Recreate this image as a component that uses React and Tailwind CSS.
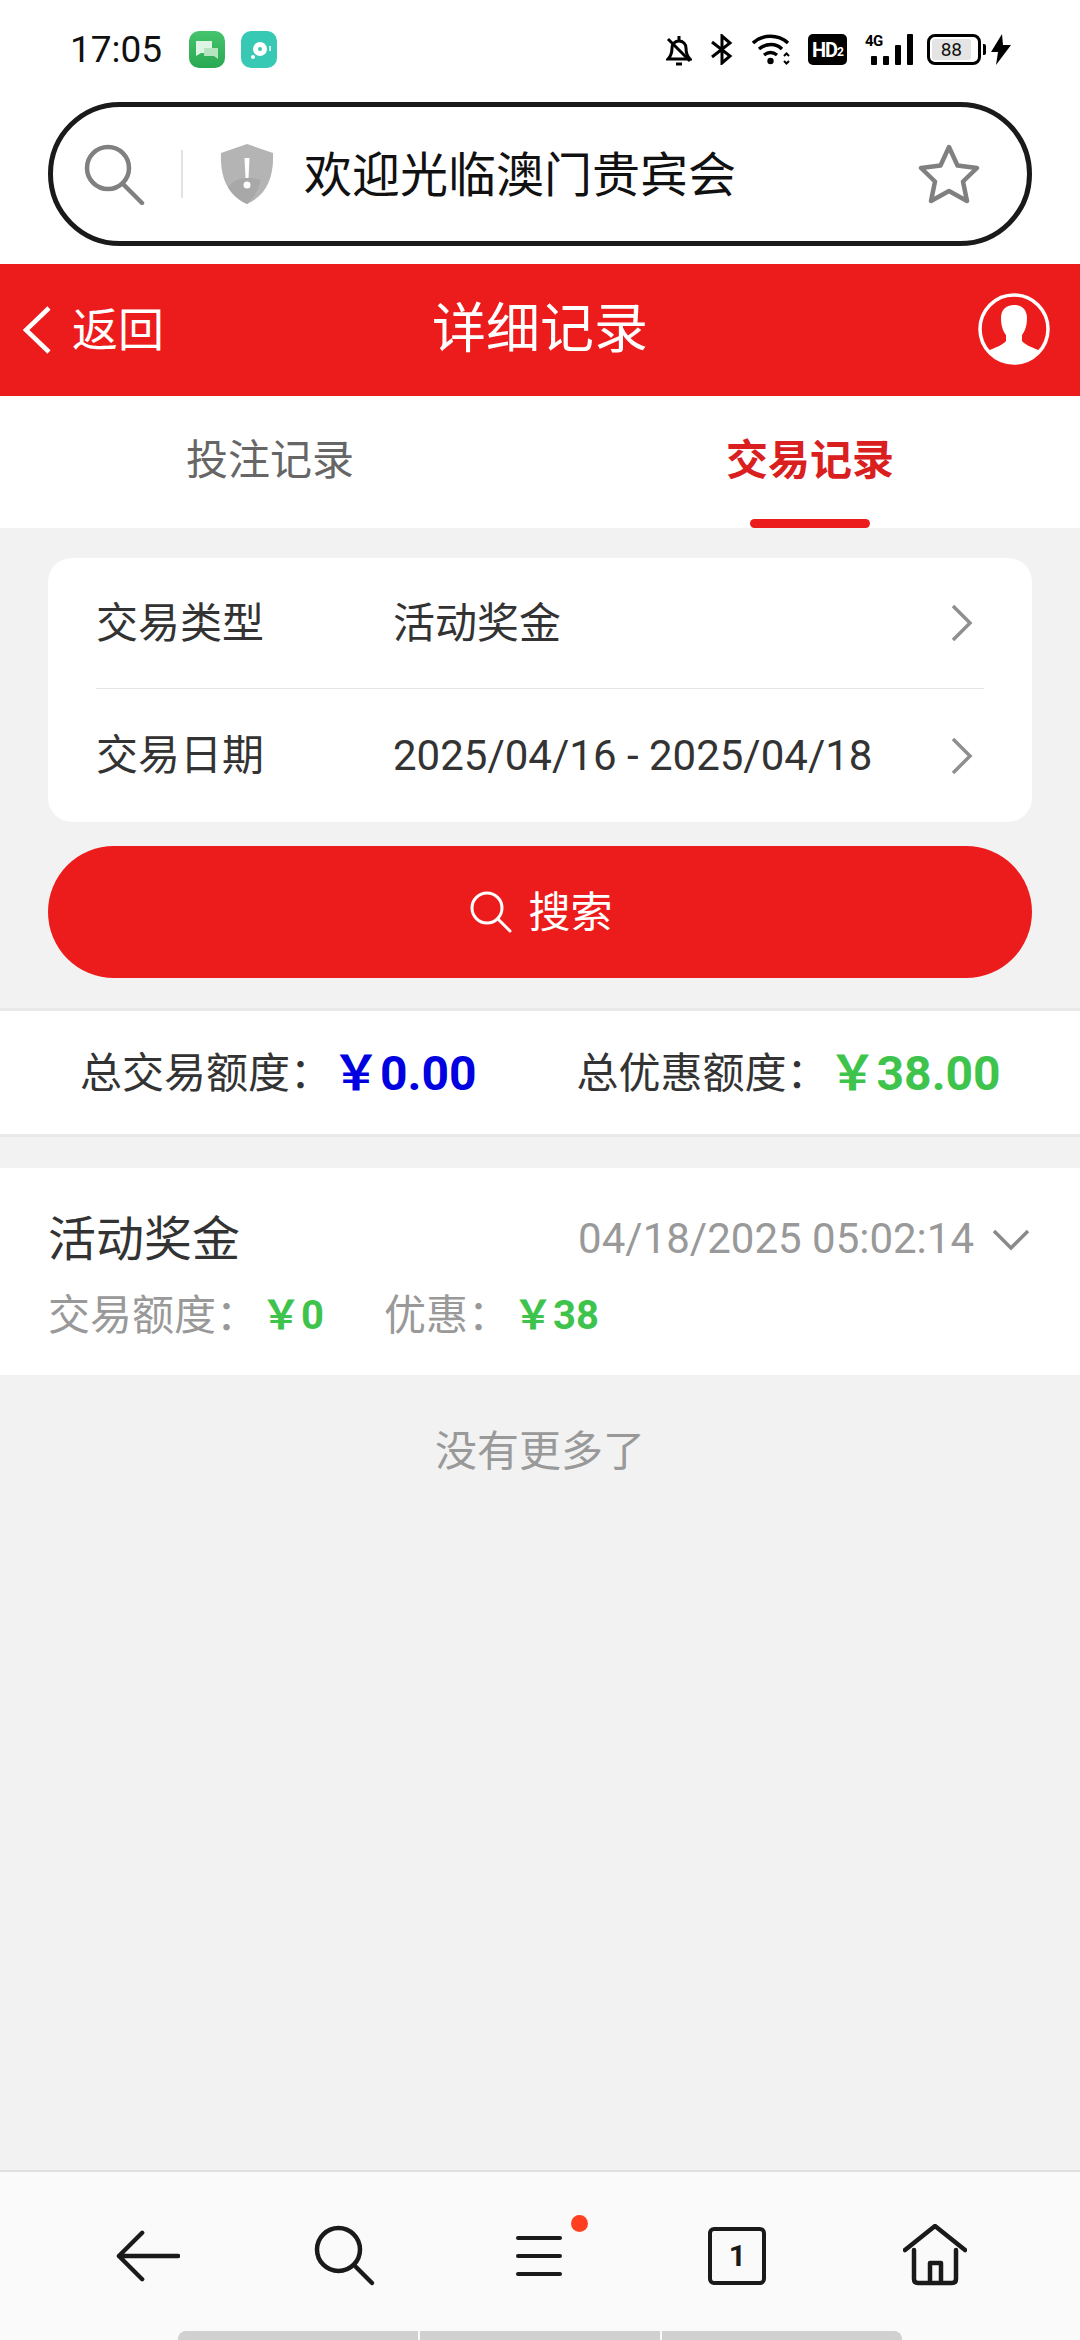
const cjk = "font-['Roboto','Noto_Sans_CJK_SC',sans-serif]";

const Chevron = () => (
  <svg className="mr-[10px]" width="24" height="38" viewBox="0 0 24 38" fill="none" stroke="#8f8f8f" strokeWidth="3.500">
    <path d="M3 2l17 17L3 36" />
  </svg>
);

const StatusIcons = () => (
  <div className="flex h-[31px] items-center text-black">
    <svg width="26" height="32" viewBox="0 0 26 32" fill="none" stroke="#000" strokeWidth="3">
      <path d="M2 25c3-3 4-6 4-11 0-4 3-7 7-7s7 3 7 7c0 5 1 8 4 11z" />
      <path d="M13 2v4M2 5l22 22M10 30h6" />
    </svg>
    <svg className="ml-[18px]" width="23" height="31" viewBox="0 0 23 31" fill="none" stroke="#000" strokeWidth="3">
      <path d="M2 8l18 14-8 7V2l8 7L2 23" />
    </svg>
    <svg className="ml-[19px]" width="40" height="31" viewBox="0 0 40 31" fill="none" stroke="#000" strokeWidth="3.400">
      <path d="M1 9c10-9 25-9 35 0M7 15c7-6 17-6 23 0M12 21c4-3 9-3 13 0" />
      <circle cx="18.500" cy="27" r="3.200" fill="#000" stroke="none" />
      <path d="M32 22l2.500-2.500L37 22M32 27l2.500 2.500L37 27" strokeWidth="2" />
    </svg>
    <div className="ml-[16px] flex h-[31px] w-[39px] items-center justify-center rounded-[5px] bg-black font-['Roboto',sans-serif] text-[20px] font-bold tracking-[-1px] text-white">
      HD<span className="mt-[4px] text-[12px]">2</span>
    </div>
    <div className="relative ml-[18px] h-[31px] w-[44px]">
      <span className="absolute left-0 top-[-4px] font-['Roboto',sans-serif] text-[15px] font-bold tracking-[-0.5px]">4G</span>
      <div className="absolute bottom-0 left-[6px] flex items-end gap-[6px]">
        <span className="h-[9px] w-[6px] rounded-[1px] bg-black" />
        <span className="h-[9px] w-[6px] rounded-[1px] bg-black" />
        <span className="h-[20px] w-[6px] rounded-[1px] bg-black" />
        <span className="h-[31px] w-[6px] rounded-[1px] bg-black" />
      </div>
    </div>
    <div className="ml-[18px] flex h-[31px] w-[54px] items-center rounded-[8px] border-[3px] border-black p-[2px]">
      <div className="flex h-full w-[88%] items-center justify-center rounded-[3px] bg-[#e4e4e4] font-['Roboto',sans-serif] text-[19px] leading-none text-[#111]">
        88
      </div>
    </div>
    <span className="ml-[2px] h-[11px] w-[3px] rounded-r-[2px] bg-black" />
    <svg className="ml-[5px]" width="20" height="31" viewBox="0 0 20 31" fill="#000">
      <path d="M11 0L0 18h7L5 31l15-20h-8z" />
    </svg>
  </div>
);

const BottomIcon = ({ children }) => (
  <div className="flex h-[64px] w-[64px] items-center justify-center">{children}</div>
);

export default function App() {
  return (
    <div className={`flex h-[2340px] w-[1080px] flex-col overflow-hidden bg-[#f2f2f2] ${cjk}`}>
      <div className="bg-white">
        {/* status bar */}
        <div className="flex h-[102px] items-start justify-between pl-[70px] pr-[69px] pt-[31px]">
          <div className="flex items-center">
            <span className="text-[37px] leading-[36px] text-[#111]">17:05</span>
            <div className="ml-[27px] flex h-[37px] w-[36px] items-center justify-center rounded-[10px] bg-gradient-to-b from-[#44c46c] to-[#29a852]">
              <svg width="24" height="22" viewBox="0 0 24 22">
                <path d="M1 2h16v12H6l-5 3z" fill="#dff5e4" />
                <path d="M9 9h14v11l-4-3H9z" fill="#b5e5c0" />
              </svg>
            </div>
            <div className="ml-[16px] flex h-[37px] w-[36px] items-center justify-center rounded-[10px] bg-[#38c9b5]">
              <svg width="26" height="26" viewBox="0 0 26 26">
                <circle cx="14" cy="12" r="7" fill="#fff" />
                <circle cx="14" cy="12" r="2" fill="#38c9b5" />
                <circle cx="7" cy="20" r="2" fill="#fff" />
                <path d="M24 9v5" stroke="#fff" strokeWidth="1.500" />
              </svg>
            </div>
          </div>
          <div className="mt-[3px]">
            <StatusIcons />
          </div>
        </div>

        {/* address bar */}
        <div className="mx-[48px] flex h-[144px] items-center rounded-[72px] border-[5px] border-[#1a1a1a] pl-[30px] pr-[47px]">
          <svg width="62" height="62" viewBox="0 0 62 62" fill="none" stroke="#808080" strokeWidth="4.500" strokeLinecap="round">
            <circle cx="25" cy="25" r="21" />
            <path d="M40 41l19 19" />
          </svg>
          <span className="ml-[36px] h-[48px] w-[2px] bg-[#e2e2e2]" />
          <svg className="ml-[37px]" width="54" height="62" viewBox="0 0 54 62">
            <path d="M27 1l26 9c1 24-6 42-26 51C7 52 0 34 1 10z" fill="#b4b4b4" />
            <path d="M27 61c-9-4-15-10-19-17 8-10 20-11 33-7-3 10-7 18-14 24z" fill="#a8a8a8" />
            <path d="M24.500 15h5l-1 20h-3z" fill="#fff" />
            <circle cx="27" cy="42" r="3.500" fill="#fff" />
          </svg>
          <span className="ml-[30px] mt-[4px] flex-1 text-[48px] leading-none text-[#111]">欢迎光临澳门贵宾会</span>
          <svg width="62" height="60" viewBox="0 0 62 60" fill="none" stroke="#808080" strokeWidth="4.500" strokeLinejoin="round">
            <path d="M31 3l8.500 18.500L59 24 45 37.500 49 57 31 47 13 57l4-19.500L3 24l19.500-2.500z" />
          </svg>
        </div>
        <div className="h-[18px]" />
      </div>

      {/* header */}
      <div className="relative flex h-[132px] items-center justify-center bg-[#ed1c1c] text-white">
        <div className="absolute left-[22px] top-0 flex h-full items-center">
          <svg width="30" height="48" viewBox="0 0 30 48" fill="none" stroke="#fff" strokeWidth="4.500">
            <path d="M27 2L4 24l23 22" />
          </svg>
          <span className="ml-[20px] text-[46px] leading-none">返回</span>
        </div>
        <span className="text-[54px] leading-none">详细记录</span>
        <svg className="absolute right-[30px] top-[29px]" width="72" height="72" viewBox="0 0 72 72">
          <circle cx="36" cy="36" r="34" fill="none" stroke="#fff" strokeWidth="3.500" />
          <path
            d="M36 12c8 0 13 5 13 13 0 8-2 13-5 17v6c3 4 12 7 18 10A34 34 0 0 1 10 58c6-3 15-6 18-10v-6c-3-4-5-9-5-17 0-8 5-13 13-13z"
            fill="#fff"
          />
        </svg>
      </div>

      {/* tabs */}
      <div className="grid h-[132px] grid-cols-2 bg-white text-[42px] leading-none">
        <div className="flex items-center justify-center pb-[2px] text-[#666]">投注记录</div>
        <div className="relative flex items-center justify-center pb-[2px] font-bold text-[#d9201f]">
          交易记录
          <span className="absolute bottom-0 left-1/2 h-[9px] w-[120px] -translate-x-1/2 rounded-[5px] bg-[#ed1c1c]" />
        </div>
      </div>

      {/* filter */}
      <div className="mx-[48px] mt-[30px] rounded-[24px] bg-white px-[48px] text-[42px] text-[#333]">
        <div className="flex h-[131px] items-center border-b-[1px] border-[#e5e5e5]">
          <span className="w-[297px]">交易类型</span>
          <span className="flex-1">活动奖金</span>
          <Chevron />
        </div>
        <div className="flex h-[133px] items-center">
          <span className="w-[297px]">交易日期</span>
          <span className="flex-1">2025/04/16 - 2025/04/18</span>
          <Chevron />
        </div>
      </div>

      <button type="button" className="mx-[48px] mt-[24px] flex h-[132px] items-center justify-center rounded-[66px] bg-[#ed1c1c] pl-[3px] text-[42px] text-white">
        <svg width="42" height="42" viewBox="0 0 42 42" fill="none" stroke="#fff" strokeWidth="3" strokeLinecap="round">
          <circle cx="17" cy="17" r="15" />
          <path d="M28 28l12 12" />
        </svg>
        <span className="ml-[16px]">搜索</span>
      </button>

      {/* totals */}
      <div className="mt-[30px] flex h-[129px] items-center border-y-[3px] border-[#e9e9e9] bg-white pl-[80px] pt-[2px] text-[42px] text-[#333]">
        <span>总交易额度：</span>
        <span className="text-[48px] font-bold text-[#0000e0]">￥0.00</span>
        <span className="ml-[100px]">总优惠额度：</span>
        <span className="text-[48px] font-bold text-[#3ec44c]">￥38.00</span>
      </div>

      {/* record */}
      <div className="mt-[31px] h-[207px] bg-white px-[48px] pt-[39px]">
        <div className="flex items-center justify-between">
          <span className="text-[48px] leading-[60px] text-[#333]">活动奖金</span>
          <div className="flex items-center text-[42px] text-[#999]">
            <span className="mb-[2px]">04/18/2025 05:02:14</span>
            <svg className="ml-[18px] mr-[2px]" width="38" height="22" viewBox="0 0 38 22" fill="none" stroke="#8a8a8a" strokeWidth="3.500">
              <path d="M2 2l17 17L36 2" />
            </svg>
          </div>
        </div>
        <div className="mt-[16px] flex items-center text-[42px] leading-[56px] text-[#999]">
          <span>交易额度：</span>
          <span className="ml-[3px] text-[40px] font-bold text-[#3ec44c]">￥0</span>
          <span className="ml-[60px]">优惠：</span>
          <span className="ml-[3px] text-[40px] font-bold text-[#3ec44c]">￥38</span>
        </div>
      </div>

      <div className="mt-[49px] text-center text-[42px] leading-[56px] text-[#999]">没有更多了</div>

      <div className="flex-1" />

      {/* bottom nav */}
      <div className="relative h-[170px] border-t-[2px] border-[#e0e0e0] bg-[#fafafa]">
        <div className="flex items-center justify-between pl-[116px] pr-[113px] pt-[52px]">
          <BottomIcon>
            <svg width="66" height="54" viewBox="0 0 66 54" fill="none" stroke="#1a1a1a" strokeWidth="4.500" strokeLinecap="round" strokeLinejoin="round">
              <path d="M27 3L3 27l24 24M3 27h61" />
            </svg>
          </BottomIcon>
          <BottomIcon>
            <svg width="64" height="64" viewBox="0 0 64 64" fill="none" stroke="#1a1a1a" strokeWidth="4.500" strokeLinecap="round">
              <circle cx="25.500" cy="25.500" r="21.500" />
              <path d="M41 41l18 18" />
            </svg>
          </BottomIcon>
          <BottomIcon>
            <div className="relative ml-[-6px] flex flex-col gap-[14px]">
              <span className="h-[4px] w-[46px] rounded-full bg-[#1a1a1a]" />
              <span className="h-[4px] w-[46px] rounded-full bg-[#1a1a1a]" />
              <span className="h-[4px] w-[46px] rounded-full bg-[#1a1a1a]" />
              <span className="absolute right-[-26px] top-[-21px] h-[17px] w-[17px] rounded-full bg-[#ff4020]" />
            </div>
          </BottomIcon>
          <BottomIcon>
            <div className="ml-[-2px] flex h-[58px] w-[58px] items-center justify-center rounded-[6px] border-[4px] border-[#1a1a1a] font-['Roboto',sans-serif] text-[30px] font-bold leading-none text-[#1a1a1a]">
              1
            </div>
          </BottomIcon>
          <BottomIcon>
            <svg width="64" height="64" viewBox="0 0 64 64" fill="none" stroke="#1a1a1a" strokeWidth="4.500" strokeLinejoin="round" strokeLinecap="round">
              <path d="M2 26L32 2l30 24M11 26v29q0 4 4 4h34q4 0 4-4V26M27 59V39h11v20" />
            </svg>
          </BottomIcon>
        </div>
        <div className="absolute bottom-0 left-[178px] flex h-[9px] w-[724px] gap-[2px]">
          <span className="flex-1 rounded-tl-[8px] bg-[#d0d0d0]" />
          <span className="flex-1 bg-[#d0d0d0]" />
          <span className="flex-1 rounded-tr-[8px] bg-[#d0d0d0]" />
        </div>
      </div>
    </div>
  );
}
